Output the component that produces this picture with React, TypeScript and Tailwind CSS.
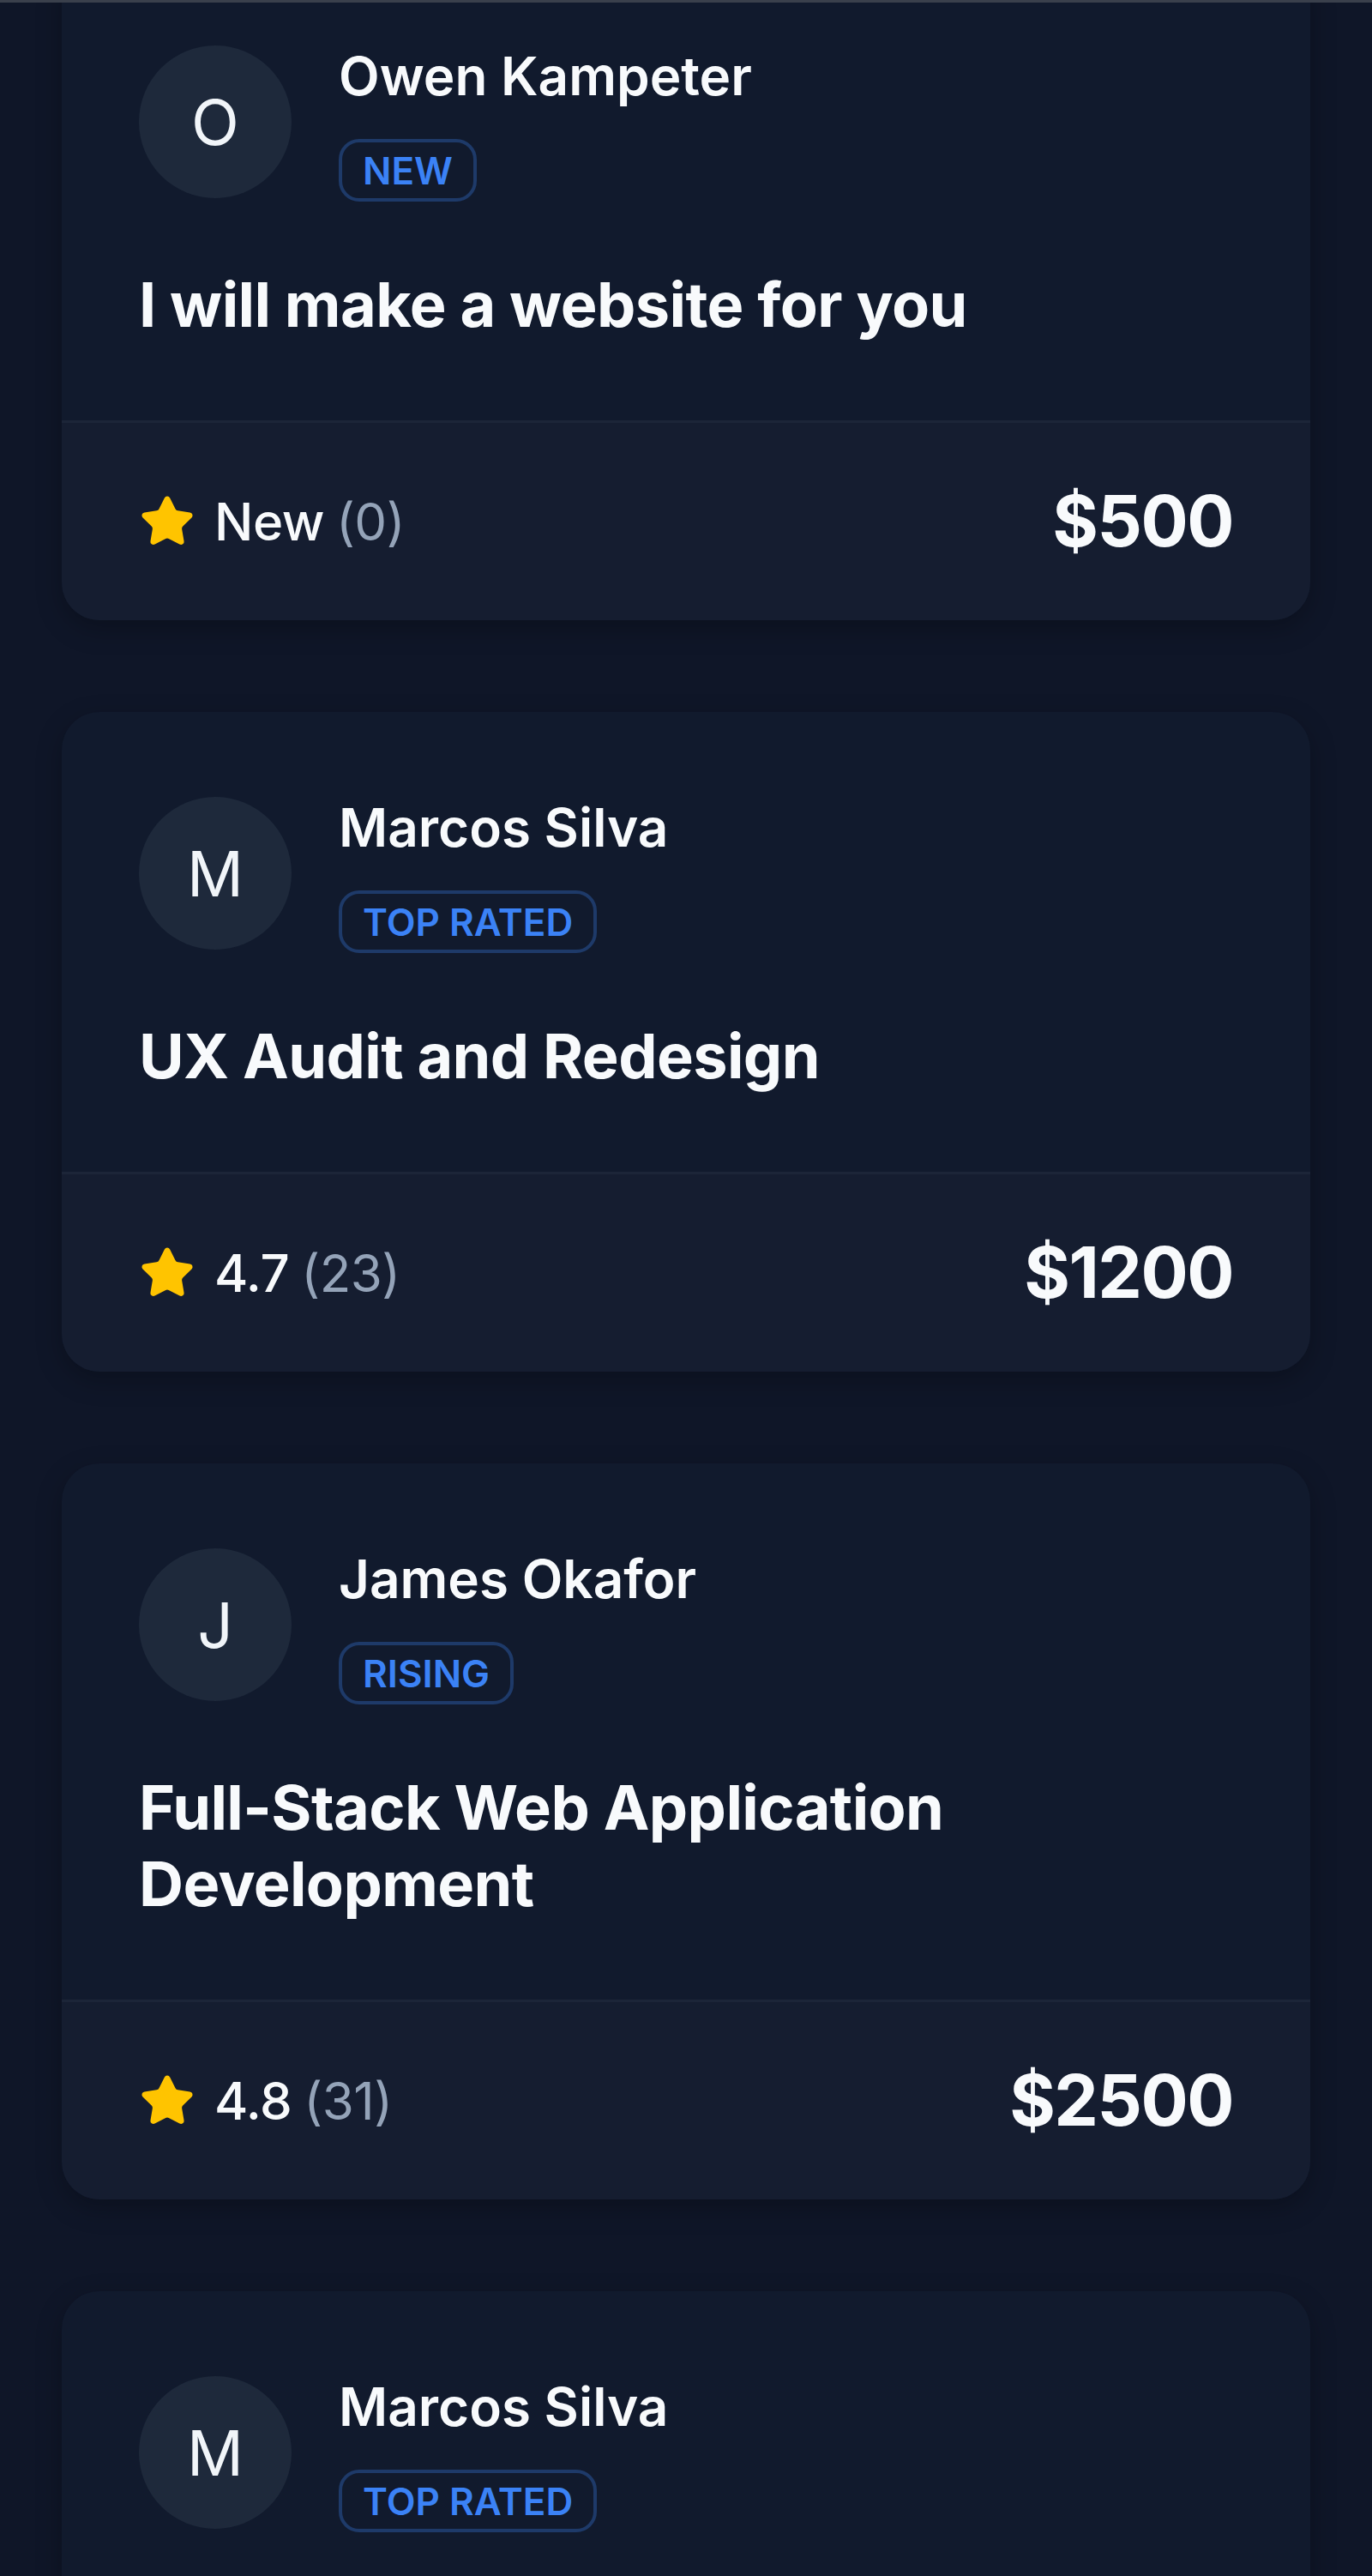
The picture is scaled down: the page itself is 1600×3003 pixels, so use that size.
import React from "react";
import { Star } from "lucide-react";

type Gig = {
  initial: string;
  name: string;
  badge: string;
  title: string;
  rating: string;
  reviews: number;
  price: string;
};

const gigs: Gig[] = [
  { initial: "O", name: "Owen Kampeter", badge: "NEW", title: "I will make a website for you", rating: "New", reviews: 0, price: "$500" },
  { initial: "M", name: "Marcos Silva", badge: "TOP RATED", title: "UX Audit and Redesign", rating: "4.7", reviews: 23, price: "$1200" },
  { initial: "J", name: "James Okafor", badge: "RISING", title: "Full-Stack Web Application Development", rating: "4.8", reviews: 31, price: "$2500" },
  { initial: "M", name: "Marcos Silva", badge: "TOP RATED", title: "UX Audit and Redesign", rating: "4.7", reviews: 23, price: "$1200" },
];

const GigCard: React.FC<{ gig: Gig }> = ({ gig }) => {
  return (
    <div className="rounded-[44px] overflow-hidden bg-[#111a2d] shadow-[0_10px_30px_rgba(0,0,0,0.25)]">
      {/* Header */}
      <div className="px-[90px] pt-[99px] pb-[91px]">
        <div className="flex items-start gap-[55px]">
          <div className="w-[178px] h-[178px] shrink-0 rounded-full bg-[#1e293b] flex items-center justify-center text-[73px] leading-none text-[#f1f5f9]">
            {gig.initial}
          </div>
          <div className="flex flex-col items-start">
            <div className="text-[62px] font-semibold leading-[72px] text-[#f8fafc]">{gig.name}</div>
            <span className="mt-[37px] h-[73px] px-[24px] flex items-center rounded-[24px] border-[4px] border-[#1e3a69] text-[44px] font-semibold leading-none text-[#3b82f6]">
              {gig.badge}
            </span>
          </div>
        </div>
        <h3 className="mt-[75px] text-[72px] font-bold leading-[89px] tracking-[-0.6px] text-[#f8fafc]">{gig.title}</h3>
      </div>

      {/* Footer */}
      <div className="h-[233px] border-t-[3px] border-[#1c2538] bg-[#151d30] px-[90px] flex items-center justify-between">
        <div className="flex items-center gap-[22px]">
          <Star className="w-[66px] h-[66px]" fill="#ffc400" color="#ffc400" strokeWidth={1.5} />
          <span className="text-[60px] font-medium leading-none tracking-[-0.5px] text-[#f8fafc]">
            {gig.rating}
            <span className="ml-[14px] font-normal text-[#94a3b8]">({gig.reviews})</span>
          </span>
        </div>
        <div className="text-[82px] font-bold leading-none tracking-[-1.5px] text-[#f8fafc]">{gig.price}</div>
      </div>
    </div>
  );
};

export default function App() {
  return (
    <div className="relative h-[3003px] overflow-hidden bg-[#0f1628] font-['Inter',sans-serif]">
      <div className="absolute top-0 left-0 right-0 h-[3px] bg-[#3a404c] z-10" />
      <div className="-mt-[46px] px-[72px] flex flex-col gap-[107px]">
        {gigs.map((gig, i) => (
          <GigCard key={i} gig={gig} />
        ))}
      </div>
    </div>
  );
}
